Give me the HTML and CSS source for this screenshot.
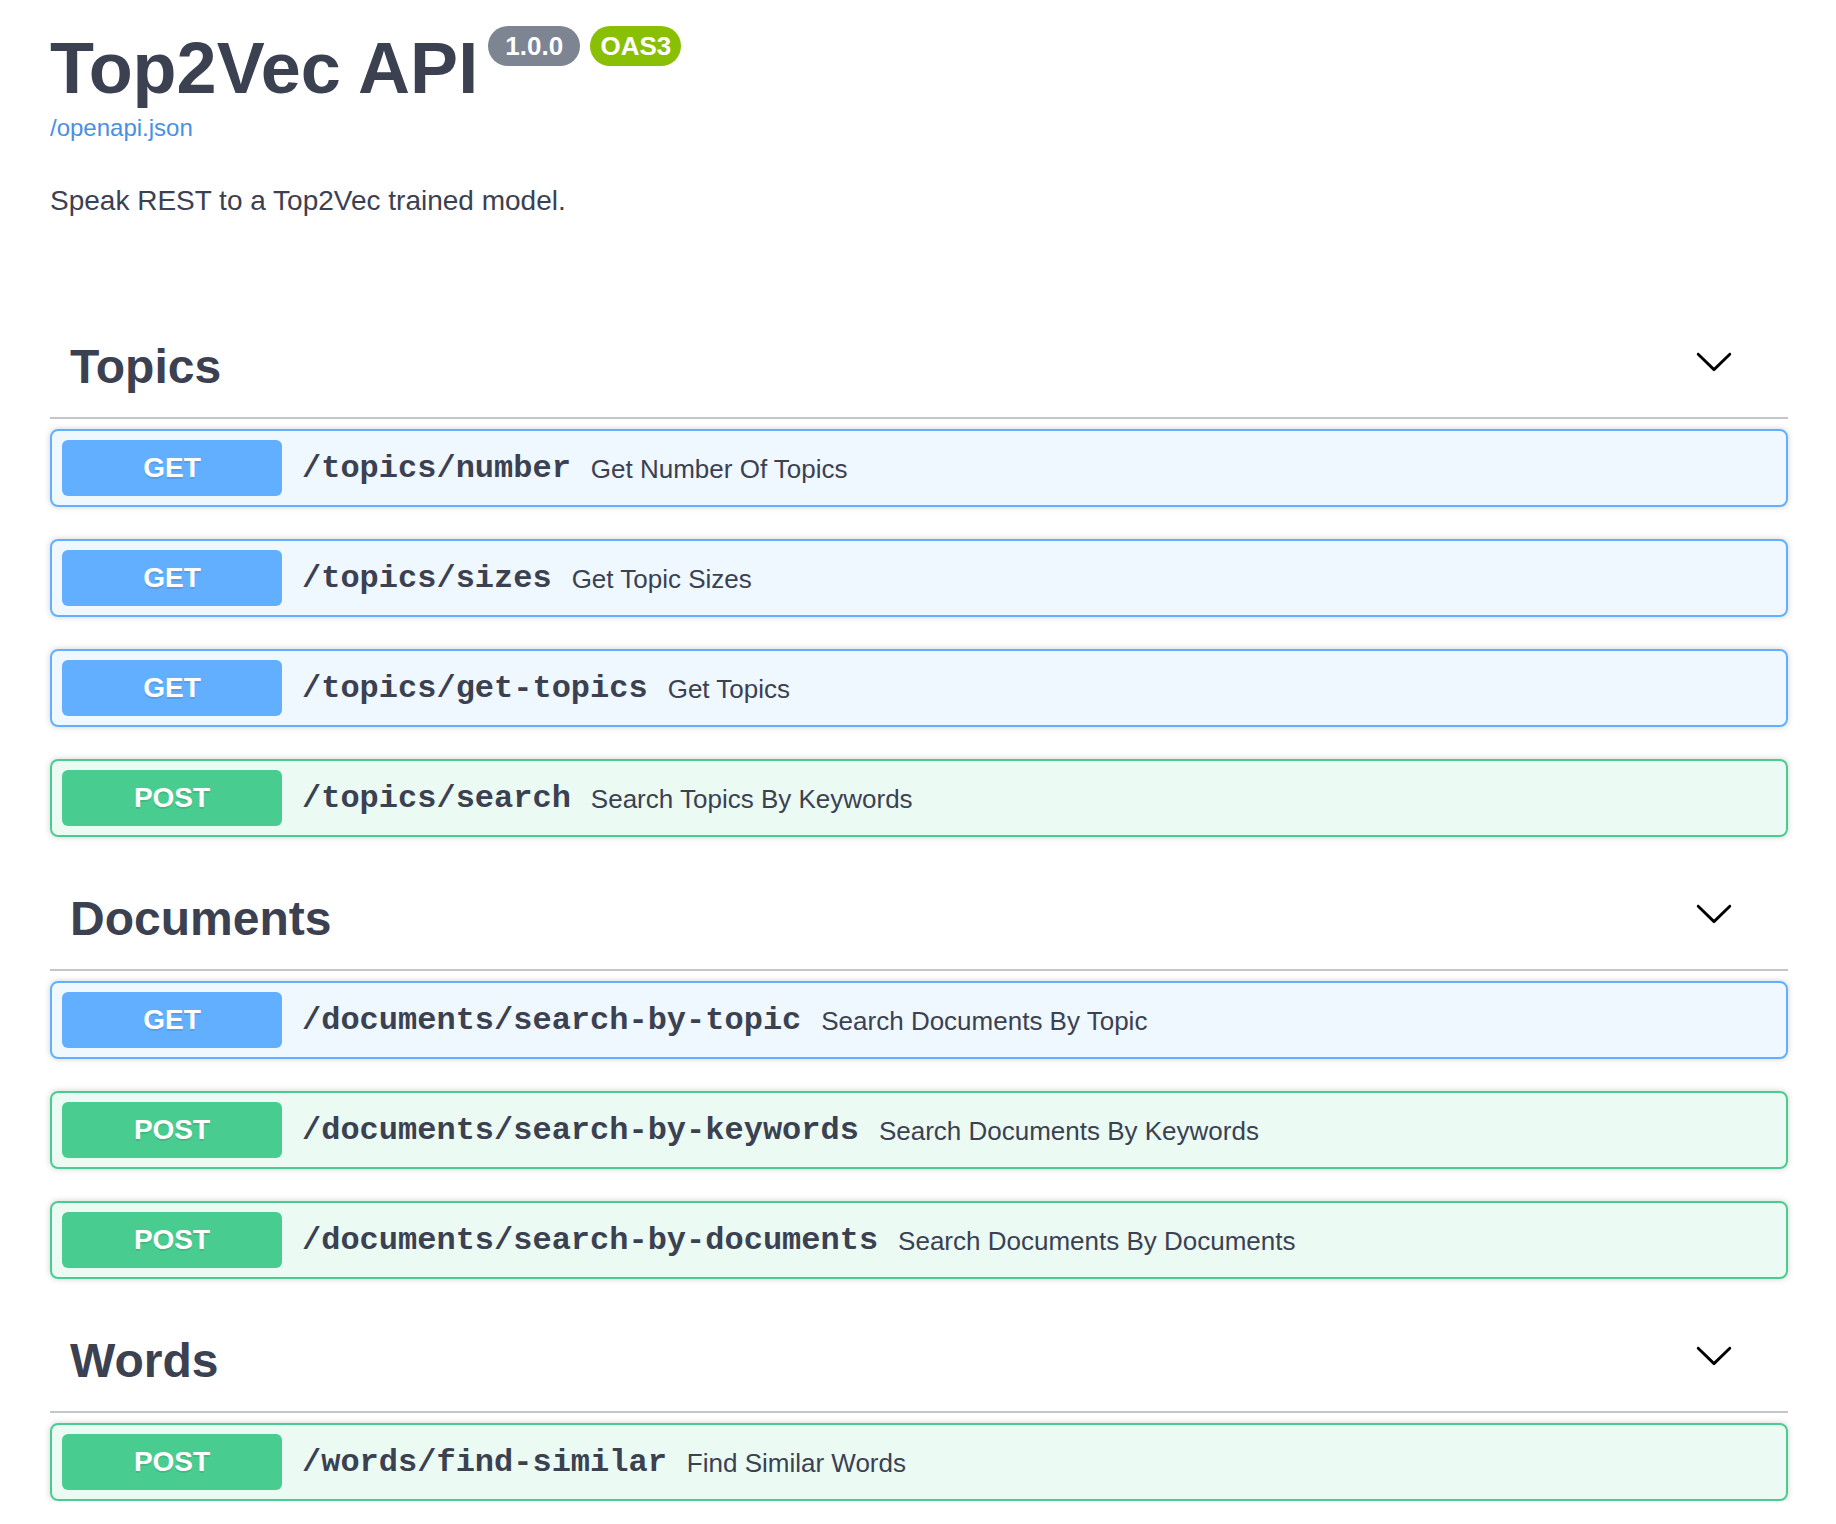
FILE: index.html
```html
<!DOCTYPE html>
<html lang="en">
<head>
<meta charset="utf-8">
<title>Top2Vec API</title>
<link rel="stylesheet" href="styles.css">
</head>
<body>
<div class="wrapper">
  <header class="info">
    <div class="title-row">
      <h1 class="title">Top2Vec API</h1>
      <span class="badge badge-version"> 1.0.0 </span>
      <span class="badge badge-oas">OAS3</span>
    </div>
    <a class="spec-link" href="#">/openapi.json</a>
    <p class="description">Speak REST to a Top2Vec trained model.</p>
  </header>

  <section class="tag-section">
    <h2 class="tag">
      <span class="tag-name">Topics</span>
      <button class="expand" type="button" aria-label="Collapse">
        <svg viewBox="0 0 20 20" width="40" height="40"><path d="M17.418 6.109c.272-.268.709-.268.979 0s.271.701 0 .969l-7.908 7.83c-.27.268-.707.268-.979 0l-7.908-7.83c-.27-.268-.27-.701 0-.969.271-.268.709-.268.979 0L10 13.25l7.418-7.141z"/></svg>
      </button>
    </h2>
    <div class="opblock opblock-get"><span class="method">GET</span><span class="path">/topics/number</span><span class="summary">Get Number Of Topics</span></div>
    <div class="opblock opblock-get"><span class="method">GET</span><span class="path">/topics/sizes</span><span class="summary">Get Topic Sizes</span></div>
    <div class="opblock opblock-get"><span class="method">GET</span><span class="path">/topics/get-topics</span><span class="summary">Get Topics</span></div>
    <div class="opblock opblock-post"><span class="method">POST</span><span class="path">/topics/search</span><span class="summary">Search Topics By Keywords</span></div>
  </section>

  <section class="tag-section">
    <h2 class="tag">
      <span class="tag-name">Documents</span>
      <button class="expand" type="button" aria-label="Collapse">
        <svg viewBox="0 0 20 20" width="40" height="40"><path d="M17.418 6.109c.272-.268.709-.268.979 0s.271.701 0 .969l-7.908 7.83c-.27.268-.707.268-.979 0l-7.908-7.83c-.27-.268-.27-.701 0-.969.271-.268.709-.268.979 0L10 13.25l7.418-7.141z"/></svg>
      </button>
    </h2>
    <div class="opblock opblock-get"><span class="method">GET</span><span class="path">/documents/search-by-topic</span><span class="summary">Search Documents By Topic</span></div>
    <div class="opblock opblock-post"><span class="method">POST</span><span class="path">/documents/search-by-keywords</span><span class="summary">Search Documents By Keywords</span></div>
    <div class="opblock opblock-post"><span class="method">POST</span><span class="path">/documents/search-by-documents</span><span class="summary">Search Documents By Documents</span></div>
  </section>

  <section class="tag-section">
    <h2 class="tag">
      <span class="tag-name">Words</span>
      <button class="expand" type="button" aria-label="Collapse">
        <svg viewBox="0 0 20 20" width="40" height="40"><path d="M17.418 6.109c.272-.268.709-.268.979 0s.271.701 0 .969l-7.908 7.83c-.27.268-.707.268-.979 0l-7.908-7.83c-.27-.268-.27-.701 0-.969.271-.268.709-.268.979 0L10 13.25l7.418-7.141z"/></svg>
      </button>
    </h2>
    <div class="opblock opblock-post"><span class="method">POST</span><span class="path">/words/find-similar</span><span class="summary">Find Similar Words</span></div>
  </section>
</div>
</body>
</html>
```

FILE: styles.css
```css
html, body {
  margin: 0;
  padding: 0;
  background: #fff;
}

body {
  font-family: "Liberation Sans", Arial, sans-serif;
  color: #3b4151;
}

.wrapper {
  padding: 0 48px 0 50px;
}

/* Info header */
.info {
  padding-top: 28px;
}

.title-row {
  display: flex;
  align-items: flex-start;
}

.title {
  margin: 0;
  font-size: 72px;
  line-height: 80px;
  font-weight: 700;
  color: #3b4151;
}

.badge {
  margin-top: -2px;
  padding: 4px 10px;
  border-radius: 57px;
  font-family: "Liberation Sans", Arial, sans-serif;
  font-size: 26px;
  line-height: 32px;
  font-weight: 700;
  color: #fff;
  white-space: pre;
}

.badge-version {
  margin-left: 10px;
  background: #7d8492;
}

.badge-oas {
  margin-left: 10px;
  background: #89bf04;
}

.spec-link {
  display: block;
  margin-top: 5px;
  font-size: 24px;
  line-height: 30px;
  color: #4990e2;
  text-decoration: none;
  width: max-content;
}

.description {
  margin: 37px 0 95px;
  font-size: 28px;
  line-height: 42px;
  color: #3b4151;
}

/* Tag sections */
.tag {
  display: flex;
  align-items: center;
  margin: 0 0 10px;
  padding: 20px 40px 20px 20px;
  border-bottom: 2px solid rgba(59, 65, 81, 0.3);
}

.tag-name {
  flex: 1;
  font-size: 48px;
  line-height: 60px;
  font-weight: 700;
  color: #3b4151;
}

.expand {
  margin: 0 0 13px;
  padding: 0 14px;
  border: 0;
  background: none;
  height: 40px;
}

.expand svg {
  display: block;
  fill: #000;
}

/* Operation blocks */
.opblock {
  display: flex;
  align-items: center;
  margin: 0 0 32px;
  padding: 9px 10px;
  border: 2px solid;
  border-radius: 8px;
  box-shadow: 0 0 6px rgba(0, 0, 0, 0.19);
}

.tag-section:last-child .opblock:last-child {
  margin-bottom: 0;
}

.opblock-get {
  border-color: #61affe;
  background: rgba(97, 175, 254, 0.1);
}

.opblock-post {
  border-color: #49cc90;
  background: rgba(73, 204, 144, 0.1);
}

.method {
  box-sizing: border-box;
  flex: 0 0 220px;
  padding: 12px 0;
  border-radius: 6px;
  font-size: 28px;
  line-height: 32px;
  font-weight: 700;
  text-align: center;
  color: #fff;
  text-shadow: 0 2px 0 rgba(0, 0, 0, 0.1);
}

.opblock-get .method {
  background: #61affe;
}

.opblock-post .method {
  background: #49cc90;
}

.path {
  padding: 2px 20px 0;
  font-family: "Liberation Mono", "Courier New", monospace;
  font-size: 32px;
  font-weight: 700;
  line-height: 40px;
  color: #3b4151;
  white-space: nowrap;
}

.summary {
  font-size: 26px;
  line-height: 32px;
  padding-top: 2px;
  color: #3b4151;
  white-space: nowrap;
}
```
